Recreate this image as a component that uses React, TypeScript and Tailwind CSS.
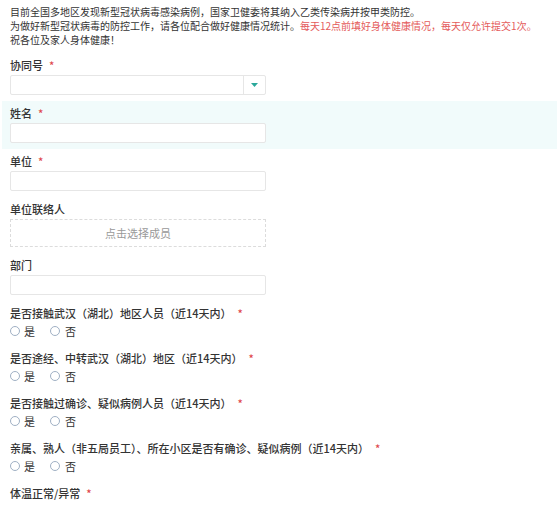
import React from "react";

const font = { fontFamily: '"Noto Sans CJK SC", "Noto Sans", sans-serif' };

function Label({ text, required }: { text: string; required?: boolean }) {
  return (
    <div className="h-[12px] leading-[12px] text-[11px] font-medium text-[#333]">
      {text}
      {required && <span className="text-[#e0474c] ml-[6px]">*</span>}
    </div>
  );
}

function Input() {
  return <div className="mt-[4px] h-[20px] w-[256px] rounded-[2px] border border-[#e6e6e6] bg-white" />;
}

function Radios() {
  return (
    <div className="mt-[4px] h-[16px] flex items-center text-[11px] text-[#333]">
      <span className="w-[10px] h-[10px] rounded-full border border-[#9fb0c4]" />
      <span className="ml-[4px]">是</span>
      <span className="ml-[15px] w-[10px] h-[10px] rounded-full border border-[#9fb0c4]" />
      <span className="ml-[5px]">否</span>
    </div>
  );
}

function Question({ text }: { text: string }) {
  return (
    <div className="px-[8px] pt-[6px] pb-[7px]">
      <Label text={text} required />
      <Radios />
    </div>
  );
}

export default function App() {
  return (
    <div className="w-[559px] h-[506px] overflow-hidden bg-white px-[2px]" style={font}>
      <div className="px-[8px] pt-[5px] mb-[6px] text-[10px] leading-[14px] text-[#333]">
        <div>目前全国多地区发现新型冠状病毒感染病例，国家卫健委将其纳入乙类传染病并按甲类防控。</div>
        <div>
          为做好新型冠状病毒的防控工作，请各位配合做好健康情况统计。
          <span className="text-[#e45b5b]">每天12点前填好身体健康情况，每天仅允许提交1次。</span>
        </div>
        <div>祝各位及家人身体健康！</div>
      </div>

      <div className="px-[8px] pt-[6px] pb-[6px]">
        <Label text="协同号" required />
        <div className="mt-[4px] h-[20px] w-[256px] rounded-[2px] border border-[#e6e6e6] bg-white flex">
          <div className="flex-1" />
          <div className="w-[22px] border-l border-[#e6e6e6] flex items-center justify-center">
            <svg width="7" height="4" viewBox="0 0 7 4">
              <path d="M0 0 L7 0 L3.5 4 Z" fill="#2aa89a" />
            </svg>
          </div>
        </div>
      </div>

      <div className="px-[8px] pt-[6px] pb-[6px] bg-[#f1fbfb]">
        <Label text="姓名" required />
        <Input />
      </div>

      <div className="px-[8px] pt-[6px] pb-[6px]">
        <Label text="单位" required />
        <Input />
      </div>

      <div className="px-[8px] pt-[6px] pb-[6px]">
        <Label text="单位联络人" />
        <div className="mt-[4px] h-[28px] w-[256px] border border-dashed border-[#dcdcdc] flex items-center justify-center text-[11px] text-[#999]">
          点击选择成员
        </div>
      </div>

      <div className="px-[8px] pt-[6px] pb-[6px]">
        <Label text="部门" />
        <Input />
      </div>

      <Question text="是否接触武汉（湖北）地区人员（近14天内）" />
      <Question text="是否途经、中转武汉（湖北）地区（近14天内）" />
      <Question text="是否接触过确诊、疑似病例人员（近14天内）" />
      <Question text="亲属、熟人（非五局员工）、所在小区是否有确诊、疑似病例（近14天内）" />

      <div className="px-[8px] pt-[6px]">
        <Label text="体温正常/异常" required />
      </div>
    </div>
  );
}
